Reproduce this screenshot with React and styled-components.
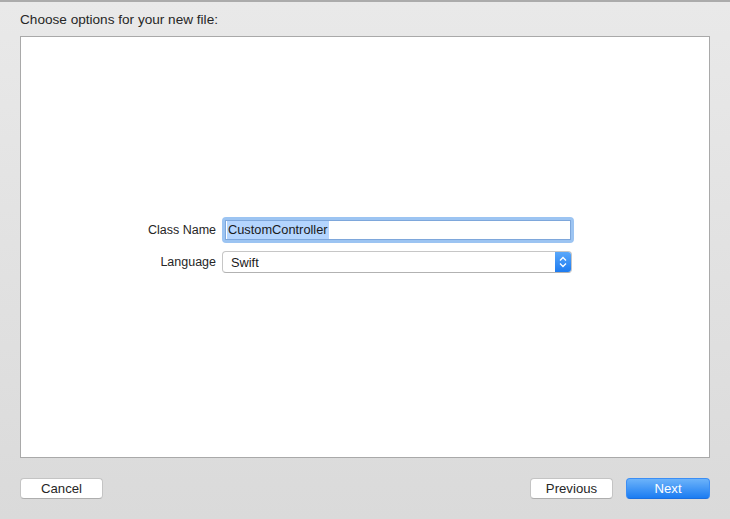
import React from "react";
import styled, { createGlobalStyle } from "styled-components";

const GlobalStyle = createGlobalStyle`
  html, body {
    margin: 0;
    padding: 0;
  }
  body {
    font-family: "Liberation Sans", Arial, sans-serif;
    -webkit-font-smoothing: antialiased;
  }
`;

const Sheet = styled.div`
  width: 730px;
  height: 519px;
  box-sizing: border-box;
  border-top: 2px solid #ababab;
  background: linear-gradient(#e9e9e9, #dadada);
  padding: 0 20px;
  display: flex;
  flex-direction: column;
`;

const Heading = styled.div`
  font-size: 13.6px;
  color: #262626;
  height: 34px;
  line-height: 36px;
  white-space: nowrap;
`;

const Panel = styled.div`
  height: 422px;
  box-sizing: border-box;
  background: #fff;
  border: 1px solid #a9a9a9;
  display: flex;
  flex-direction: column;
  justify-content: center;
  padding-bottom: 4px;
`;

const Form = styled.div`
  display: grid;
  grid-template-columns: 195px 352px;
  column-gap: 6px;
  row-gap: 8px;
  align-items: center;
`;

const Label = styled.div`
  font-size: 12.5px;
  color: #262626;
  text-align: right;
`;

const FieldRing = styled.div`
  height: 26px;
  box-sizing: border-box;
  border: 3px solid #9cc4f2;
  border-radius: 4px;
`;

const Field = styled.div`
  height: 100%;
  box-sizing: border-box;
  background: #fff;
  border: 1px solid #7ea7db;
  font-size: 12.8px;
  color: #1a1a1a;
  display: flex;
  align-items: center;
  padding-left: 1px;
`;

const Selected = styled.span`
  background: #b4d5fe;
  padding: 1px 1px 2px;
`;

const Popup = styled.div`
  height: 22px;
  width: 350px;
  box-sizing: border-box;
  background: #fff;
  border: 1px solid #c6c6c6;
  border-bottom-color: #b2b2b2;
  border-radius: 4px;
  display: flex;
  align-items: center;
  font-size: 12.8px;
  color: #1a1a1a;
  overflow: hidden;
`;

const PopupText = styled.div`
  flex: 1;
  padding-left: 8px;
`;

const Stepper = styled.div`
  width: 16px;
  height: 100%;
  background: linear-gradient(#5aa8fb, #1d7bf0);
  display: flex;
  align-items: center;
  justify-content: center;
`;

const Footer = styled.div`
  display: flex;
  align-items: center;
  padding-top: 20px;
`;

const Spacer = styled.div`
  flex: 1;
`;

const Button = styled.div`
  width: ${(p) => (p.$wide ? 84 : 83)}px;
  height: 21px;
  box-sizing: border-box;
  border-radius: 4px;
  font-size: 13.2px;
  display: flex;
  align-items: center;
  justify-content: center;
  margin-left: ${(p) => p.$gap || 0}px;
  color: ${(p) => (p.$primary ? "#fff" : "#262626")};
  background: ${(p) =>
    p.$primary ? "linear-gradient(#6cb3fa, #1b7cf2)" : "#fff"};
  border: 1px solid ${(p) => (p.$primary ? "#3b8ef5" : "#c4c4c4")};
  border-bottom-color: ${(p) => (p.$primary ? "#1a6fe0" : "#aeaeae")};
`;

const Chevrons = () => (
  <svg width="8" height="12" viewBox="0 0 8 12">
    <path d="M1 4.5 L4 1.5 L7 4.5" fill="none" stroke="#fff" strokeWidth="1.3" />
    <path d="M1 7.5 L4 10.5 L7 7.5" fill="none" stroke="#fff" strokeWidth="1.3" />
  </svg>
);

export default function App() {
  return (
    <>
      <GlobalStyle />
      <Sheet>
        <Heading>Choose options for your new file:</Heading>
        <Panel>
          <Form>
            <Label>Class Name</Label>
            <FieldRing>
              <Field>
                <Selected>CustomController</Selected>
              </Field>
            </FieldRing>
            <Label>Language</Label>
            <Popup>
              <PopupText>Swift</PopupText>
              <Stepper>
                <Chevrons />
              </Stepper>
            </Popup>
          </Form>
        </Panel>
        <Footer>
          <Button>Cancel</Button>
          <Spacer />
          <Button>Previous</Button>
          <Button $primary $wide $gap={13}>
            Next
          </Button>
        </Footer>
      </Sheet>
    </>
  );
}
